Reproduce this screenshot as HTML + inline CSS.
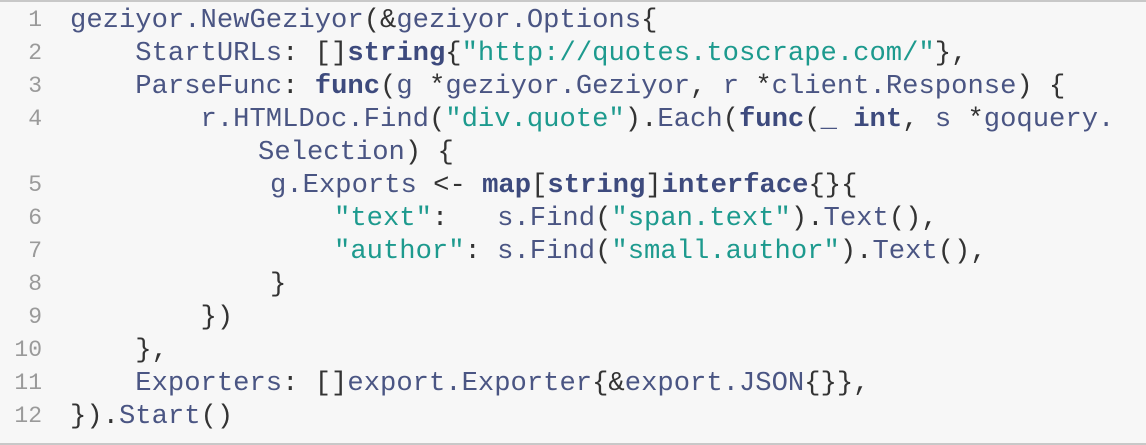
<!DOCTYPE html>
<html><head><meta charset="utf-8"><style>
html,body{margin:0;padding:0;}
body{width:1146px;height:445px;background:#f7f7f7;position:relative;overflow:hidden;}
.box{position:absolute;left:0;top:0;width:1146px;height:445px;border-top:2px solid #c8c8c8;border-bottom:2px solid #c8c8c8;box-sizing:border-box;background:#f7f7f7;}
.l{position:absolute;left:0;height:33px;line-height:33px;font-family:"Liberation Mono",monospace;font-size:27.2px;white-space:pre;color:#333;}
.n{position:absolute;left:0;width:42px;text-align:right;color:#9a9a9a;font-size:23px;}
.c{position:absolute;left:70px;}
.i{color:#4a5583;}
.k{color:#3d4a7d;font-weight:bold;}
.s{color:#1d9a8e;}
</style></head><body><div class="box"></div>
<div class="l" style="top:4px"><span class="n">1</span><span class="c"><span class="i">geziyor.NewGeziyor</span>(&amp;<span class="i">geziyor.Options</span>{</span></div>
<div class="l" style="top:37px"><span class="n">2</span><span class="c">    <span class="i">StartURLs</span>: []<span class="k">string</span>{<span class="s">"http://quotes.toscrape.com/"</span>},</span></div>
<div class="l" style="top:70px"><span class="n">3</span><span class="c">    <span class="i">ParseFunc</span>: <span class="k">func</span>(<span class="i">g</span> *<span class="i">geziyor.Geziyor</span>, <span class="i">r</span> *<span class="i">client.Response</span>) {</span></div>
<div class="l" style="top:103px"><span class="n">4</span><span class="c">        <span class="i">r.HTMLDoc.Find</span>(<span class="s">"div.quote"</span>).<span class="i">Each</span>(<span class="k">func</span>(<span class="i">_</span> <span class="k">int</span>, <span class="i">s</span> *<span class="i">goquery.</span></span></div>
<div class="l" style="top:136px"><span class="c" style="left:258px"><span class="i">Selection</span>) {</span></div>
<div class="l" style="top:169px"><span class="n">5</span><span class="c" style="left:270px"><span class="i">g.Exports</span> &lt;- <span class="k">map</span>[<span class="k">string</span>]<span class="k">interface</span>{}{</span></div>
<div class="l" style="top:202px"><span class="n">6</span><span class="c" style="left:334px"><span class="s">"text"</span>:   <span class="i">s.Find</span>(<span class="s">"span.text"</span>).<span class="i">Text</span>(),</span></div>
<div class="l" style="top:235px"><span class="n">7</span><span class="c" style="left:334px"><span class="s">"author"</span>: <span class="i">s.Find</span>(<span class="s">"small.author"</span>).<span class="i">Text</span>(),</span></div>
<div class="l" style="top:268px"><span class="n">8</span><span class="c" style="left:270px">}</span></div>
<div class="l" style="top:301px"><span class="n">9</span><span class="c">        })</span></div>
<div class="l" style="top:334px"><span class="n">10</span><span class="c">    },</span></div>
<div class="l" style="top:367px"><span class="n">11</span><span class="c">    <span class="i">Exporters</span>: []<span class="i">export.Exporter</span>{&amp;<span class="i">export.JSON</span>{}},</span></div>
<div class="l" style="top:400px"><span class="n">12</span><span class="c">}).<span class="i">Start</span>()</span></div>
</body></html>
